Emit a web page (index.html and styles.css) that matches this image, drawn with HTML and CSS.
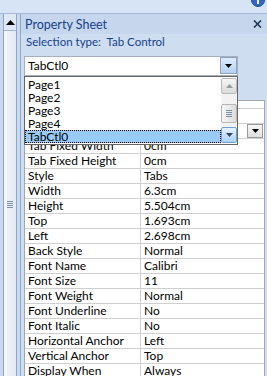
FILE: index.html
```html
<!DOCTYPE html>
<html>
<head>
  <title>Property Sheet</title>
  <link rel="stylesheet" href="styles.css">
</head>
<body>

  <div class="topbar">
    <svg class="info" width="14" height="14" viewBox="0 0 14 14">
      <circle cx="7" cy="7" r="6.5" fill="#2f68c4" stroke="#1d4b9a"/>
      <rect x="6" y="6" width="2" height="5" fill="#fff"/>
      <rect x="6" y="3" width="2" height="2" fill="#fff"/>
    </svg>
  </div>

  <div class="main">
    <!-- barra de desplazamiento del formulario -->
    <div class="side">
      <div class="vscroll">
        <div class="vscroll-up">
          <svg width="9" height="5" viewBox="0 0 9 5"><path d="M0 5 L4.5 0 L9 5 Z" fill="#000"/></svg>
        </div>
        <div class="vscroll-thumb">
          <span class="grip"></span>
        </div>
      </div>
    </div>

    <div class="sheet">
      <div class="sheet-title">
        <span>Property Sheet</span>
        <svg class="close" width="9" height="8" viewBox="0 0 9 8">
          <path d="M1 0.5 L8 7.5 M8 0.5 L1 7.5" stroke="#1e3556" stroke-width="1.6"/>
        </svg>
      </div>
      <div class="sel-type">Selection type:&nbsp; Tab Control</div>

      <div class="combo-wrap">
        <div class="combo">
          <span class="combo-text">TabCtl0</span>
          <span class="combo-btn">
            <svg width="7" height="4" viewBox="0 0 7 4"><path d="M0 0 L7 0 L3.5 4 Z" fill="#000"/></svg>
          </span>
        </div>

        <!-- lista desplegada -->
        <div class="droplist">
          <div class="items">
            <div class="item">Page1</div>
            <div class="item">Page2</div>
            <div class="item">Page3</div>
            <div class="item">Page4</div>
            <div class="item selected">TabCtl0</div>
          </div>
          <div class="lscroll">
            <div class="lbtn">
              <svg width="7" height="4" viewBox="0 0 7 4"><path d="M0 4 L3.5 0 L7 4 Z" fill="#9a9a9a"/></svg>
            </div>
            <div class="ltrack">
              <div class="lthumb"><span class="grip"></span></div>
            </div>
            <div class="lbtn hot">
              <svg width="7" height="4" viewBox="0 0 7 4"><path d="M0 0 L7 0 L3.5 4 Z" fill="#33475e"/></svg>
            </div>
          </div>
        </div>
      </div>

      <!-- franja de pestañas, tapada por la lista -->
      <div class="tabs"></div>

      <div class="page">
        <table class="grid">
          <tr><td class="name"></td><td class="val"></td></tr>
          <tr><td class="name"></td><td class="val"><span class="row-btn"><svg width="7" height="4" viewBox="0 0 7 4"><path d="M0 0 L7 0 L3.5 4 Z" fill="#000"/></svg></span></td></tr>
          <tr><td class="name">Tab Fixed Width</td><td class="val">0cm</td></tr>
          <tr><td class="name">Tab Fixed Height</td><td class="val">0cm</td></tr>
          <tr><td class="name">Style</td><td class="val">Tabs</td></tr>
          <tr><td class="name">Width</td><td class="val">6.3cm</td></tr>
          <tr><td class="name">Height</td><td class="val">5.504cm</td></tr>
          <tr><td class="name">Top</td><td class="val">1.693cm</td></tr>
          <tr><td class="name">Left</td><td class="val">2.698cm</td></tr>
          <tr><td class="name">Back Style</td><td class="val">Normal</td></tr>
          <tr><td class="name">Font Name</td><td class="val">Calibri</td></tr>
          <tr><td class="name">Font Size</td><td class="val">11</td></tr>
          <tr><td class="name">Font Weight</td><td class="val">Normal</td></tr>
          <tr><td class="name">Font Underline</td><td class="val">No</td></tr>
          <tr><td class="name">Font Italic</td><td class="val">No</td></tr>
          <tr><td class="name">Horizontal Anchor</td><td class="val">Left</td></tr>
          <tr><td class="name">Vertical Anchor</td><td class="val">Top</td></tr>
          <tr><td class="name">Display When</td><td class="val">Always</td></tr>
        </table>
      </div>
    </div>
  </div>

</body>
</html>
```

FILE: styles.css
```css
body {
  margin: 0;
  width: 267px;
  height: 376px;
  overflow: hidden;
  font-family: "Lato", "Liberation Sans", sans-serif;
  font-size: 12px;
  background-color: #cddcf0;
}

.topbar {
  height: 13px;
  background-color: #d6e4f5;
  border-bottom: 1px solid #a3b9d6; /* línea bajo la cinta */
  display: flex;
  justify-content: flex-end;
  overflow: hidden;
}

.info {
  margin-top: -7px;
  margin-right: 2px;
}

.main {
  display: flex;
  height: 362px;
}

/* barra vertical izquierda */
.side {
  width: 17px;
  padding-left: 3px;
  background-color: #c9daef;
}

.vscroll {
  width: 12px;
  height: 100%;
  border-left: 1px solid #8aa6cc;
  border-right: 1px solid #8aa6cc;
  background-color: #eef3fa;
  display: flex;
  flex-direction: column;
}

.vscroll-up {
  height: 16px;
  display: flex;
  align-items: center;
  justify-content: center;
  background-color: #dfe9f6;
}

.vscroll-thumb {
  flex: 1;
  border-top: 1px solid #9db4d2;
  background: linear-gradient(to right, #f4f7fb, #e3eaf4);
  display: flex;
  align-items: center;
  justify-content: center;
}

.vscroll-thumb .grip {
  margin-top: 2px;
}

.grip {
  display: block;
  width: 6px;
  height: 7px;
  background: repeating-linear-gradient(to bottom, #7c8ea6 0, #7c8ea6 1px, transparent 1px, transparent 2px);
}

/* hoja de propiedades */
.sheet {
  flex: 1;
  border-left: 1px solid #8fa8c8;
  background-color: #cfddf0;
  color: #15428b;
}

.sheet-title {
  height: 20px;
  padding: 0 5px 0 4px;
  background-color: #c6d7ed;
  display: flex;
  align-items: center;
  justify-content: space-between;
  font-size: 12.5px;
}

.sel-type {
  height: 16px;
  line-height: 16px;
  padding-left: 5px;
  font-size: 11.5px;
}

.combo-wrap {
  position: relative;
  margin: 6px 0 0 3px;
  width: 214px;
}

.combo {
  height: 18px;
  border: 1px solid #a6afba;
  background-color: #fff;
  display: flex;
  justify-content: space-between;
  color: #000;
}

.combo-text {
  padding-left: 3px;
  line-height: 17px;
}

.combo-btn, .row-btn {
  width: 15px;
  height: 15px;
  border: 1px solid #8aa3c3;
  background: linear-gradient(to bottom, #dcebfb, #b5d2f1);
  display: flex;
  align-items: center;
  justify-content: center;
}

.droplist {
  position: absolute;
  top: 20px;
  left: 0;
  width: 212px;
  height: 67px;
  border: 1px solid #656565;
  background-color: #fff;
  display: flex;
  color: #000;
  z-index: 2;
}

.items {
  flex: 1;
  padding-top: 1px;
}

.item {
  height: 13px;
  line-height: 13px;
  padding-left: 3px;
}

.item.selected {
  height: 11px;
  line-height: 11px;
  padding-left: 2px;
  background-color: #99cbf8;
  border: 1px dotted #000;
}

.lscroll {
  width: 16px;
  padding: 1px 0;
  display: flex;
  flex-direction: column;
}

.lbtn {
  height: 14px;
  width: 14px;
  border: 1px solid #b9b9b9;
  border-radius: 2px;
  background: linear-gradient(to bottom, #f6f6f6, #dadada);
  display: flex;
  align-items: center;
  justify-content: center;
}

.lbtn.hot {
  border-color: #6fa0cf;
  background: linear-gradient(to bottom, #e4f2fd, #a9d3f5);
}

.ltrack {
  flex: 1;
  background-color: #f2f2f2;
  padding-top: 10px;
}

.lthumb {
  height: 17px;
  width: 14px;
  border: 1px solid #b9b9b9;
  border-radius: 2px;
  background: linear-gradient(to right, #f6f6f6, #dcdcdc);
  display: flex;
  align-items: center;
  justify-content: center;
}

.tabs {
  height: 24px;
}

.page {
  margin: 0 2px 0 3px;
  padding-top: 7px;
  border-top: 1px solid #a6a6a6;
  border-right: 1px solid #a6a6a6;
  border-left: 1px solid #a6a6a6;
  background-color: #fff;
}

.grid {
  width: 100%;
  border-collapse: collapse;
  color: #000;
}

.grid td {
  height: 14px;
  padding: 0 0 0 3px;
  border-top: 1px solid #cfcfcf;
  border-bottom: 1px solid #cfcfcf;
  line-height: 14px;
  white-space: nowrap;
}

.grid td.name {
  width: 112px;
  border-right: 1px solid #cfcfcf;
}

.grid td.val {
  position: relative;
}

.row-btn {
  position: absolute;
  right: 1px;
  top: 0;
  width: 14px;
  height: 12px;
  border-color: #9a9a9a;
  background: linear-gradient(to bottom, #f7f7f7, #dedede);
}
```
